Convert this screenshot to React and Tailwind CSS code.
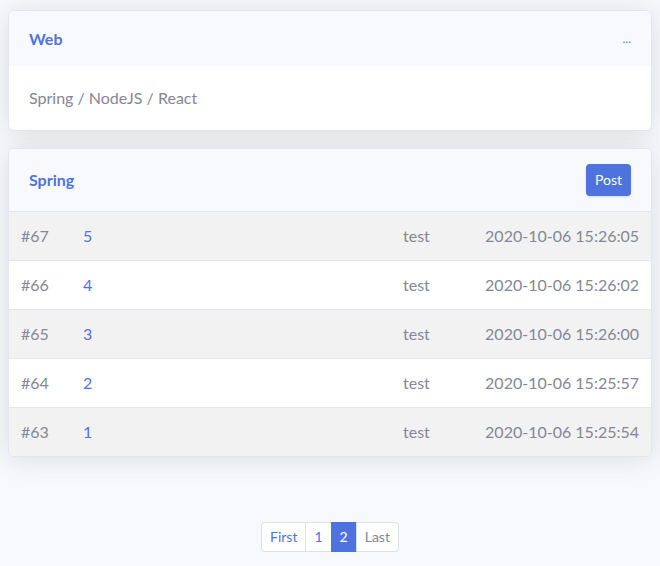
import React from 'react';

const posts = [
  { id: 67, title: '5', author: 'test', date: '2020-10-06 15:26:05' },
  { id: 66, title: '4', author: 'test', date: '2020-10-06 15:26:02' },
  { id: 65, title: '3', author: 'test', date: '2020-10-06 15:26:00' },
  { id: 64, title: '2', author: 'test', date: '2020-10-06 15:25:57' },
  { id: 63, title: '1', author: 'test', date: '2020-10-06 15:25:54' }
];

const App = () => {
  return (
    <div
      className="min-h-[566px] bg-[#f8f9fc] px-2 pt-[10px] text-base text-[#858796]"
      style={{ fontFamily: 'Lato, "Open Sans", sans-serif' }}
    >
      <div className="rounded-md border border-[#e3e6f0] bg-white shadow-[0_2px_28px_0_rgba(58,59,69,0.15)] overflow-hidden">
        <div className="flex items-center justify-between bg-[#f8f9fc] px-5 pt-4 pb-[15px]">
          <h6 className="font-bold leading-6 text-[#4e73df]">Web</h6>
          <span className="text-xs leading-6 text-[#4e73df]">...</span>
        </div>
        <div className="px-5 py-5 leading-6">Spring / NodeJS / React</div>
      </div>

      <div className="mt-[17px] rounded-md border border-[#e3e6f0] bg-white shadow-[0_2px_28px_0_rgba(58,59,69,0.15)] overflow-hidden">
        <div className="flex items-center justify-between border-b border-[#e3e6f0] bg-[#f8f9fc] px-5 pt-[15px] pb-[15px]">
          <h6 className="font-bold leading-6 text-[#4e73df]">Spring</h6>
          <button className="h-8 rounded bg-[#4e73df] px-[9px] text-sm text-white shadow-sm">Post</button>
        </div>
        <table className="w-full table-fixed border-collapse">
          <colgroup>
            <col className="w-[74px]" />
            <col />
            <col className="w-[80px]" />
            <col className="w-[180px]" />
          </colgroup>
          <tbody>
            {posts.map((post, i) => (
              <tr
                key={post.id}
                className={`${i === 0 ? '' : 'border-t'} border-[#e3e6f0] ${i % 2 === 0 ? 'bg-[#f2f2f2]' : 'bg-white'}`}
              >
                <td className="py-3 pl-3 leading-6">#{post.id}</td>
                <td className="py-3 leading-6 text-[#4e73df]">{post.title}</td>
                <td className="py-3 pl-3 leading-6">{post.author}</td>
                <td className="py-3 pr-3 text-right leading-6">{post.date}</td>
              </tr>
            ))}
          </tbody>
        </table>
      </div>

      <div className="mt-[65px] flex justify-center">
        <ul className="flex text-sm leading-[28px]">
          <li className="rounded-l border border-[#dddfeb] bg-white px-2 text-[#4e73df]">First</li>
          <li className="-ml-px border border-[#dddfeb] bg-white px-2 text-[#4e73df]">1</li>
          <li className="-ml-px border border-[#4e73df] bg-[#4e73df] px-2 text-white">2</li>
          <li className="-ml-px rounded-r border border-[#dddfeb] bg-white px-2 text-[#858796]">Last</li>
        </ul>
      </div>
    </div>
  );
};

export default App;
